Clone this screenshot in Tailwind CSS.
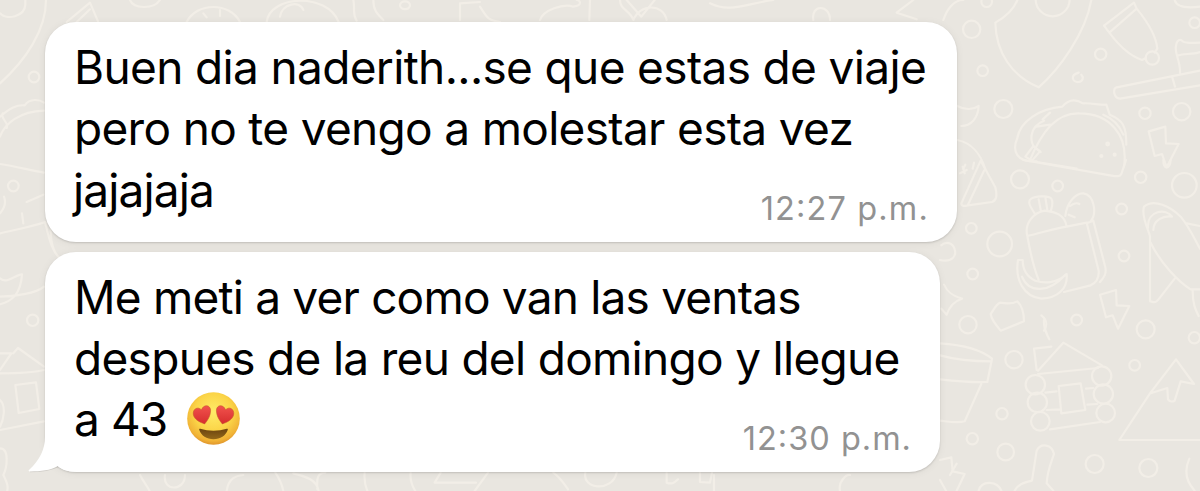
<!DOCTYPE html>
<html lang="es">
<head>
<meta charset="utf-8">
<title>Chat</title>
<script src="https://cdn.jsdelivr.net/npm/@tailwindcss/browser@4"></script>
</head>
<body class="relative h-[491px] w-[1200px] overflow-hidden bg-[#e9e6e0] font-['Inter','Liberation_Sans',sans-serif]">
<!-- Wallpaper doodles -->
<svg class="absolute inset-0" width="1200" height="491" viewBox="0 0 1200 491" fill="none" aria-hidden="true">
  <g stroke="#f2eee7" stroke-width="6.5" stroke-linecap="round" stroke-linejoin="round">
    <g transform="translate(940 0) scale(.33333)">
      <circle cx="95" cy="88" r="26"/><circle cx="140" cy="5" r="16"/><circle cx="128" cy="212" r="16"/><circle cx="190" cy="327" r="27"/>
      <circle cx="338" cy="-2" r="51"/><circle cx="482" cy="163" r="17"/><path d="M416 218c-28 8-18 30 0 28 14-2 15-15 8-22"/>
      <path d="M232 0c-12 32-38 52-66 68 2 90 50 160 130 194 60-52 140-160 158-262"/>
      <path d="M492 77 582 8l8 18-82 72zM508 98c25 34 56 68 98 82l12-6M590 26c28 34 58 78 62 120l-8 12"/><circle cx="637" cy="174" r="20"/>
      <path d="M780 212 530 262c-12 4-10 32 10 34l240-40M697 232l8 28M720 218c2-34-18-60-12-80 2-20 14-22 20-14 14 8 34 4 52 4M716 166c16-6 40-2 64-10M704 0c6 24 44 24 76 20"/>
      <circle cx="764" cy="68" r="16"/><circle cx="615" cy="340" r="17"/><circle cx="725" cy="335" r="26"/>
      <path d="M626 394l50-14 2 50 38 2-36 70-14-40-22 6z"/>
      <path d="M290 484c-60 4-75-30-58-70 8-50 66-88 135-94 20-24 42-22 62-10 26-2 50 6 70 4l10 30c40 16 50 34 50 90M268 484c38-90 80-146 150-144 90 0 148 64 134 160M290 486l120 20M330 338l-22 20M312 362c-50 20-40 70-28 80l18 14M290 380l40-6M490 344c36 14 54 46 60 60"/>
      <path d="M256 470l24-32 20 16-24 28z"/><circle cx="503" cy="432" r="4"/><circle cx="484" cy="468" r="3"/><circle cx="524" cy="464" r="3"/>
      <path d="M52 318c24 14 50 10 64 0-2 38-24 60-52 60M52 420c40 8 70 40 84 88M70 506l6-12M98 506l4-18"/>
    </g>
    <g transform="translate(940 160) scale(.33333)">
      <path d="M250 0l260 46c24 4 30 4 34-4l14-42M60 40l20-10M68 20l6 20"/>
      <path d="M122 2 64 130c0 10 10 8 20 6l72-10c14-4 16-20 10-44zM132 32 84 134"/>
      <circle cx="240" cy="58" r="27"/><circle cx="353" cy="78" r="16"/><circle cx="94" cy="205" r="16"/><circle cx="179" cy="252" r="37"/><circle cx="98" cy="342" r="16"/><circle cx="545" cy="147" r="16"/><circle cx="602" cy="52" r="17"/><circle cx="733" cy="76" r="37"/><circle cx="552" cy="288" r="16"/><circle cx="410" cy="480" r="16"/><path d="M670 0c0 30 20 30 22 0"/>
      <path d="M0 300c38 8 50-14 44-32C38 244 14 246 4 256M12 374c10 22 24 34 54 42-26 8-38 24-46 48L4 446"/>
      <circle cx="84" cy="494" r="26"/><path d="M152 462c8-10 14-28 28-34 22 4 38 4 52-4 14 14 20 40 20 60l-70 28c-12-14-28-34-30-50zM304 466c20 16 18 30 8 46"/>
      <path d="M262 228c-10-40 20-70 52-76 30 4 60 10 66 48-40 6-80 20-118 28zM262 228c8 46 18 92 34 132M380 200l60-12 36 144c2 24-8 36-24 44l-80 20M440 190l20-8 36 140c4 20-4 30-16 44M284 160c-12-18-24-36-10-44 10-6 50-12 60 0 8 14 0 28-2 38M296 118l6 32M316 112l6 38M376 168c4-40 32-70 54-68 32 4 42 60 22 84M386 164l18 8M390 138c10-8 22-10 28-6"/>
      <path d="M234 300c-10 60 18 110 70 116 50-2 80-30 76-74-30 30-70 28-94 20-26-12-38-36-38-62zM246 350c20 50 80 50 130-6"/>
      <path d="M480 404l48-14 2 46 38 2-34 68-16-40-20 6z"/>
      <path d="M630 424V230c0-10-28-60-18-90 30-26 80 0 110 30 28 34 46 76 58 96M632 248c30 62 84 118 120 140h28M632 424c16 8 22-4 30-14l42-54M640 210c0-30 30-44 56-40-16-26-76-20-72 34M740 190l40 8M758 392c0 40 8 56 18 76"/><circle cx="617" cy="508" r="27"/>
    </g>
    <g transform="translate(940 320) scale(.33333)">
      <circle cx="222" cy="119" r="26"/><circle cx="186" cy="281" r="17"/><circle cx="97" cy="356" r="17"/><circle cx="197" cy="396" r="25"/><circle cx="584" cy="136" r="16"/><circle cx="763" cy="53" r="17"/><circle cx="464" cy="432" r="27"/><circle cx="625" cy="444" r="27"/>
      <path d="M312 0c-2 30 8 40 16 58M0 70c60 4 120 16 156 46l-14 70c-50 2-90-2-142-8M0 106c50 14 100 18 154 18M124 192l-50 112c-20 6-40 2-74-2"/>
      <path d="M290 150l-8-64 52-6M294 152l76-84 116 68M294 162l180-18M356 198l66-8 14 80-72 10zM316 218l34-4M320 270l42-2M438 206l22-2M442 254l30-2M330 328l150-22"/>
      <circle cx="286" cy="194" r="29"/><circle cx="292" cy="247" r="29"/><circle cx="301" cy="304" r="28"/><circle cx="485" cy="168" r="29"/><circle cx="490" cy="222" r="29"/><circle cx="497" cy="279" r="28"/>
      <path d="M780 360H538l92-140 78-102 54 74-40-8-18 58c-8 4-16 2-20-4l-2-34-50 16"/>
      <path d="M748 416c-18 40-8 70 16 96M0 420l34-8 4 42 36 8-24 50M0 480l18 32M116 512c10-34 56-28 68 0M224 512c10-20 30-26 52-30l14-90c12-24 46-20 52 10-10 30-20 50-22 88l20 22"/>
    </g>
    <g transform="scale(.33333)">
      <path d="M0 40c20 22 74 10 76-26V0M138 0c0 90-60 180-138 250M0 350c30-26 50-36 74-34 16-22 44-18 58-8M0 410c14-40 60-76 132-78M8 340c-8 20 20 24 12 44M0 492c40 6 80 16 132 26M0 700c40-10 90-18 136-34M80 606l50-22M66 640l4 30M0 640c14-16 20-30 12-50"/>
      <circle cx="102" cy="231" r="16"/><circle cx="40" cy="558" r="16"/>
      <path d="M136 670c10 40 20 90 50 110M152 690c0 60 20 80 40 100M200 66 270 8l24 56M230 66l40-38M390 0c10 26 70 30 90 0M560 66c30-60 130-60 160 0M610 40l10 12M660 30v18M800 66c10-80 180-90 216 0M840 50c6-40 60-50 70-20M1060 0c6 30-4 40 10 62M1120 0c0 30 10 40 30 60M1380 60V10l60-4M1200 16c0-16 30-16 30 0s-30 14-30 0"/>
      <path d="M1440 20c20 30 20 40 60 46M1620 60c10-30 70-50 100-40 30-4 20-20 10-20M1770 0l-2 60M1860 0c0 30 30 30 40 60 20-50 90-50 100 0M1880 0l44 50 40-50M2130 10c60 30 110 0 190-10M2740 0l-50 38 60 20M2440 60c-8-48 50-48 50 0M2830 60c10-30 30-60 60-60"/>
      <path d="M0 835c20 20 50-14 66-12-4 60-30 80-66 90M0 890c40 0 110-10 132-30M0 1060l34 0-34 50M40 1060l14-16 78 56M0 1120c50 0 90 0 132-10M46 1155l62-8 10 80-62 12zM0 1290l132-26M0 1200c20 20 10 60 0 80M0 1345c30 0 20 60 10 80 10 20 20 40 6 60"/><circle cx="98" cy="961" r="17"/>
      <path d="M420 1425c10 20 20 30 30 50M495 1425c-8 50 60 50 60 0M680 1473c6-40 30-46 50-48M826 1418c14 20 20 36 24 55M880 1420c40 10 70 20 76 53M976 1418c-30 0-24 30-24 50M1094 1418c-2 20 2 40 8 55M1232 1418c-2 20 4 40 14 55M1322 1418l-18 30h124M1464 1418l-40 55M1660 1418c20 14 30 30 44 50M1756 1418c-10 50 80 60 94 0M2000 1418v30c16 6 24 0 34-10M2100 1418v28l30 2 6-30M2142 1425v48M2040 1473"/>
      <path d="M2520 1473c-6-30 20-50 30-48M2850 1425l20-34"/>
    </g>
  </g>
</svg>

<main class="relative flex flex-col items-start gap-[10px] pt-[22px] pl-[45px]">
  <section class="relative h-[219.500px] w-[912px] rounded-[31px] bg-white pt-[15px] pl-[29px] shadow-[0_1px_2px_rgba(0,0,0,0.14),0_1px_8px_rgba(0,0,0,0.06)]">
    <p class="text-[46px] leading-[61.25px] whitespace-nowrap text-black">
      <span class="block w-max tracking-[-0.65px]">Buen dia naderith...se que estas de viaje</span>
      <span class="block w-max tracking-[-0.68px]">pero no te vengo a molestar esta vez</span>
      <span class="-ml-[1px] block w-max tracking-[-0.85px]">jajajaja</span>
    </p>
    <time class="absolute right-[28px] bottom-[13px] text-[32.5px] leading-[40px] tracking-[1.15px] text-[#929292]">12<span class="relative -top-[3px]">:</span>27 p.m.</time>
  </section>

  <section class="relative h-[220px] w-[895px] rounded-[31px] bg-white pt-[15px] pl-[29px] shadow-[0_1px_2px_rgba(0,0,0,0.14),0_1px_8px_rgba(0,0,0,0.06)]">
    <!-- Bubble tail -->
    <svg class="absolute -left-[17px] top-[170px]" width="60" height="52" viewBox="28 422 60 52" aria-hidden="true">
      <path fill="none" stroke="#000" stroke-opacity=".1" stroke-width="1.500" d="M30 471.500c11 0 20-1 28-5"/>
      <path fill="#fff" d="M45 422v15c0 12-5 23-16 33-1 1 0 1.500 1 1.400 11 0 20-1 28-5.400 4 4 9 5.500 17 5.500l10-8V422z"/>
    </svg>
    <p class="relative text-[46px] leading-[61.25px] whitespace-nowrap text-black">
      <span class="block w-max tracking-[-0.8px]">Me meti a ver como van las ventas</span>
      <span class="block w-max tracking-[-0.7px]">despues de la reu del domingo y llegue</span>
      <span class="flex h-[61px] w-max items-center"><span class="tracking-[-0.9px]">a 43</span>
        <svg class="mb-[2px] ml-[18.500px]" width="55" height="55" viewBox="0 0 56 56" role="img" aria-label="😍">
          <defs>
            <radialGradient id="face" cx=".5" cy=".38" r=".64"><stop offset="0" stop-color="#ffeb68"/><stop offset=".55" stop-color="#fbd548"/><stop offset=".85" stop-color="#f1b336"/><stop offset="1" stop-color="#dc8e2a"/></radialGradient>
            <linearGradient id="heart" x2="0" y2="1"><stop stop-color="#f2524d"/><stop offset="1" stop-color="#d62e2e"/></linearGradient>
            <linearGradient id="mouth" x2="0" y2="1"><stop stop-color="#6b4410"/><stop offset="1" stop-color="#936719"/></linearGradient>
          </defs>
          <circle cx="28" cy="28" r="26.800" fill="url(#face)"/>
          <path id="h" fill="url(#heart)" stroke="#c7522b" stroke-width=".6" d="M19 33.500C13 31.500 8 28.500 7.400 23.500 7 18 12 15.500 15.800 19.200 17.500 13.500 24.800 13.500 25 19.700 25 25.500 22 30 19 33.500z"/>
          <use href="#h" transform="matrix(-1 0 0 1 56 0)"/>
          <path fill="url(#mouth)" d="M14.500 38.500c8.500 2.700 18.500 2.700 27 0 .8-.2 1.300.3 1 1.200C40.500 45.500 35 49 28 49s-12.500-3.500-14.500-9.300c-.3-.9.200-1.400 1-1.200z"/>
        </svg>
      </span>
    </p>
    <time class="absolute right-[28px] bottom-[13px] text-[32.5px] leading-[40px] tracking-[1px] text-[#929292]">12<span class="relative -top-[3px]">:</span>30 p.m.</time>
  </section>
</main>
</body>
</html>
